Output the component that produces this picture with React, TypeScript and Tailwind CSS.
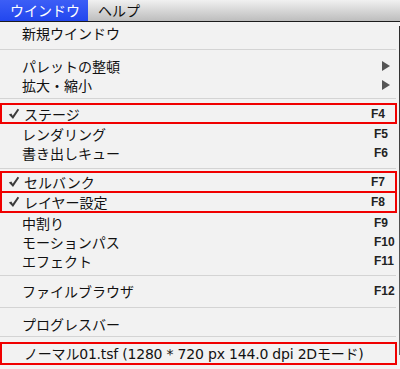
import React from 'react';

type Item = {
  label: string;
  key?: string;
  checked?: boolean;
  arrow?: boolean;
};

const jp = { fontFamily: '"Noto Sans CJK JP", "Noto Sans", sans-serif' };
const mixed = { fontFamily: '"DejaVu Sans", "Noto Sans CJK JP", sans-serif' };
const latin = { fontFamily: '"Liberation Sans", Arial, sans-serif' };

const Check = () => (
  <svg width="12" height="12" viewBox="0 0 12 12" className="shrink-0">
    <path d="M0.8 6.6 L3.4 5.4 L4.7 7.7 L9.6 0.8 L11.2 1.8 L5 11 Z" fill="#3c3c3c" />
  </svg>
);

const Arrow = () => (
  <svg width="8" height="10" viewBox="0 0 8 10">
    <path d="M0 0 L8 5 L0 10 Z" fill="#555" />
  </svg>
);

const Row = ({ item, h = 'h-[19px]', font = jp, extra = '' }: { item: Item; h?: string; font?: React.CSSProperties; extra?: string }) => (
  <div className={`${h} flex items-center text-[14px] text-[#111] leading-none`}>
    <div className="w-[22px] flex justify-center pl-[2px]">{item.checked && <Check />}</div>
    <span style={font} className={`flex-1 whitespace-nowrap ${extra}`}>
      {item.label}
    </span>
    {item.arrow && (
      <div className="w-[25px] flex justify-start pl-[9px]">
        <Arrow />
      </div>
    )}
    {item.key && (
      <span style={latin} className="w-[24px] text-[12px] font-bold text-[#222]">
        {item.key}
      </span>
    )}
  </div>
);

const Boxed = ({ children, className = '' }: { children: React.ReactNode; className?: string }) => (
  <div className={`border-2 border-[#f00000] w-[397px] ${className}`}>{children}</div>
);

const Sep = ({ h, top }: { h: string; top: string }) => (
  <div className={`${h} ${top}`}>
    <div className="h-px bg-[#d4d4d4] w-[396px]" />
  </div>
);

export default function App() {
  return (
    <div className="w-[400px] h-[369px] bg-[#f2f2f2] overflow-hidden flex flex-col">
      {/* menu bar */}
      <div className="h-[22px] flex items-stretch bg-gradient-to-b from-[#f1f1f1] to-[#bdbdbd] border-b border-[#1c1c1c] text-[14px]" style={jp}>
        <div className="w-[88px] bg-gradient-to-b from-[#3c5ef6] to-[#2246ee] text-white pl-[10px] flex items-center">
          ウインドウ
        </div>
        <div className="pl-[10px] flex items-center text-[#111]">ヘルプ</div>
      </div>

      <div className="flex flex-1">
        <div className="w-[398px] flex flex-col pt-[1px]">
          <Row item={{ label: '新規ウインドウ' }} />
          <Sep h="h-[14px]" top="pt-[7px]" />
          <Row item={{ label: 'パレットの整頓', arrow: true }} />
          <Row item={{ label: '拡大・縮小', arrow: true }} />
          <Sep h="h-[9px]" top="pt-[4px]" />
          <Boxed>
            <Row item={{ label: 'ステージ', key: 'F4', checked: true }} h="h-[17px]" />
          </Boxed>
          <Row item={{ label: 'レンダリング', key: 'F5' }} />
          <Row item={{ label: '書き出しキュー', key: 'F6' }} />
          <Sep h="h-[9px]" top="pt-[6px]" />
          <Boxed>
            <Row item={{ label: 'セルバンク', key: 'F7', checked: true }} h="h-[18px]" />
          </Boxed>
          <Boxed className="-mt-[2px]">
            <Row item={{ label: 'レイヤー設定', key: 'F8', checked: true }} h="h-[18px]" />
          </Boxed>
          <Row item={{ label: '中割り', key: 'F9' }} />
          <Row item={{ label: 'モーションパス', key: 'F10' }} />
          <Row item={{ label: 'エフェクト', key: 'F11' }} />
          <Sep h="h-[11px]" top="pt-[5px]" />
          <Row item={{ label: 'ファイルブラウザ', key: 'F12' }} h="h-[20px]" />
          <Sep h="h-[13px]" top="pt-[6px]" />
          <Row item={{ label: 'プログレスバー' }} />
          <Sep h="h-[9px]" top="pt-[3px]" />
          <Boxed>
            <Row
              item={{ label: 'ノーマル01.tsf (1280 * 720 px 144.0 dpi 2Dモード)' }}
              font={mixed}
              extra="tracking-[-0.2px]"
            />
          </Boxed>
        </div>
        <div className="w-[2px] flex">
          <div className="w-px" />
          <div className="w-px mt-[4px] mb-[14px] bg-gradient-to-b from-[#2a2a2a] to-[#6a6a6a]" />
        </div>
      </div>
    </div>
  );
}
